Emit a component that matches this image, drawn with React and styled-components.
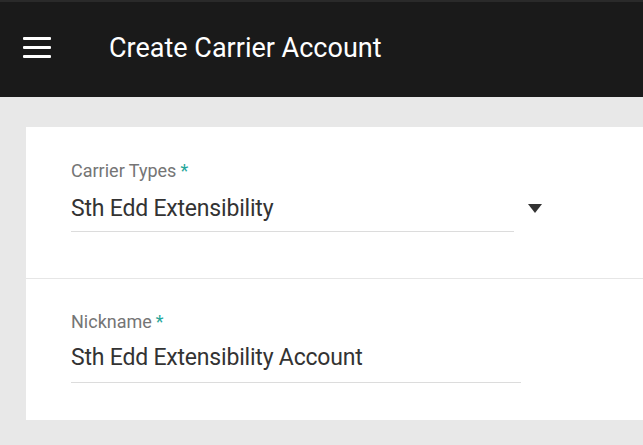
import styled, { createGlobalStyle } from "styled-components";

const GlobalStyle = createGlobalStyle`
  html, body {
    margin: 0;
    padding: 0;
    background: #e8e8e8;
    font-family: Roboto, "Liberation Sans", sans-serif;
  }
  * { box-sizing: border-box; }
`;

const Header = styled.header`
  height: 97px;
  background-color: #1a1a1a;
  border-top: 2px solid #2a2a2a;
  display: flex;
  align-items: center;
  padding-left: 23px;
  padding-bottom: 4px;
`;

const MenuButton = styled.button`
  width: 28px;
  height: 21px;
  padding: 0;
  border: 0;
  background: transparent;
  display: flex;
  flex-direction: column;
  justify-content: space-between;
  cursor: pointer;
  span {
    display: block;
    height: 3px;
    border-radius: 1px;
    background: #fff;
  }
`;

const Title = styled.h1`
  margin: 0 0 0 58px;
  color: #fff;
  font-size: 27px;
  font-weight: 400;
  line-height: 32px;
`;

const Main = styled.main`
  padding: 30px 0 25px 26px;
`;

const Card = styled.section`
  background: #fff;
`;

const Section = styled.div`
  padding: ${(p) => p.pad};
  border-bottom: ${(p) => (p.divider ? "1px solid #e6e6e6" : "none")};
`;

const Label = styled.label`
  display: block;
  margin-left: 45px;
  font-size: 18px;
  line-height: 22px;
  color: #757575;
  em {
    font-style: normal;
    color: #26a69a;
    margin-left: 4px;
  }
`;

const FieldRow = styled.div`
  display: flex;
  align-items: center;
  margin-left: 45px;
`;

const Field = styled.div`
  width: ${(p) => p.width}px;
  margin-top: ${(p) => p.top}px;
  padding-bottom: ${(p) => p.bottom}px;
  border-bottom: 1px solid #dcdcdc;
  font-size: 23px;
  line-height: 28px;
  letter-spacing: -0.2px;
  color: #333;
  white-space: nowrap;
`;

const Caret = styled.span`
  width: 0;
  height: 0;
  margin-left: 14px;
  margin-top: 2px;
  border-left: 7.5px solid transparent;
  border-right: 7.5px solid transparent;
  border-top: 9px solid #333;
`;

export default function App() {
  return (
    <>
      <GlobalStyle />
      <Header>
        <MenuButton aria-label="menu">
          <span />
          <span />
          <span />
        </MenuButton>
        <Title>Create Carrier Account</Title>
      </Header>
      <Main>
        <Card>
          <Section pad="33px 0 46px" divider>
            <Label>
              Carrier Types<em>*</em>
            </Label>
            <FieldRow>
              <Field width={443} top={13} bottom={8}>
                Sth Edd Extensibility
              </Field>
              <Caret />
            </FieldRow>
          </Section>
          <Section pad="32px 0 37px">
            <Label>
              Nickname<em>*</em>
            </Label>
            <FieldRow>
              <Field width={450} top={11} bottom={10}>
                Sth Edd Extensibility Account
              </Field>
            </FieldRow>
          </Section>
        </Card>
      </Main>
    </>
  );
}
